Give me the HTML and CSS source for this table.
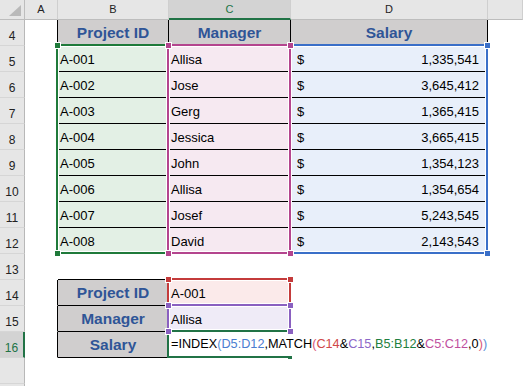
FILE: index.html
```html
<!DOCTYPE html>
<html>
<head>
<meta charset="utf-8">
<link rel="stylesheet" href="styles.css">
</head>
<body>
<div class="sheet">
  <div class="row hrow">
    <div class="cell corner"><svg width="24" height="19" viewBox="0 0 24 19"><polygon points="9,16 21,16 21,5" fill="#b9b9b9"/></svg></div>
    <div class="cell ch ca">A</div>
    <div class="cell ch cb">B</div>
    <div class="cell ch cc on">C</div>
    <div class="cell ch cd">D</div>
    <div class="cell ch ce"></div>
  </div>

  <div class="row">
    <div class="cell rh">4</div>
    <div class="cell ca bk-r"></div>
    <div class="cell cb th">Project ID</div>
    <div class="cell cc th">Manager</div>
    <div class="cell cd th">Salary</div>
    <div class="cell ce"></div>
  </div>

  <div class="row">
    <div class="cell rh">5</div>
    <div class="cell ca"></div>
    <div class="cell cb fg bk-b txt">A-001</div>
    <div class="cell cc fp bk-b txt">Allisa</div>
    <div class="cell cd fb bk-b money"><span>$</span><span>1,335,541</span></div>
    <div class="cell ce"></div>
  </div>
  <div class="row">
    <div class="cell rh">6</div>
    <div class="cell ca"></div>
    <div class="cell cb fg bk-b txt">A-002</div>
    <div class="cell cc fp bk-b txt">Jose</div>
    <div class="cell cd fb bk-b money"><span>$</span><span>3,645,412</span></div>
    <div class="cell ce"></div>
  </div>
  <div class="row">
    <div class="cell rh">7</div>
    <div class="cell ca"></div>
    <div class="cell cb fg bk-b txt">A-003</div>
    <div class="cell cc fp bk-b txt">Gerg</div>
    <div class="cell cd fb bk-b money"><span>$</span><span>1,365,415</span></div>
    <div class="cell ce"></div>
  </div>
  <div class="row">
    <div class="cell rh">8</div>
    <div class="cell ca"></div>
    <div class="cell cb fg bk-b txt">A-004</div>
    <div class="cell cc fp bk-b txt">Jessica</div>
    <div class="cell cd fb bk-b money"><span>$</span><span>3,665,415</span></div>
    <div class="cell ce"></div>
  </div>
  <div class="row">
    <div class="cell rh">9</div>
    <div class="cell ca"></div>
    <div class="cell cb fg bk-b txt">A-005</div>
    <div class="cell cc fp bk-b txt">John</div>
    <div class="cell cd fb bk-b money"><span>$</span><span>1,354,123</span></div>
    <div class="cell ce"></div>
  </div>
  <div class="row">
    <div class="cell rh">10</div>
    <div class="cell ca"></div>
    <div class="cell cb fg bk-b txt">A-006</div>
    <div class="cell cc fp bk-b txt">Allisa</div>
    <div class="cell cd fb bk-b money"><span>$</span><span>1,354,654</span></div>
    <div class="cell ce"></div>
  </div>
  <div class="row">
    <div class="cell rh">11</div>
    <div class="cell ca"></div>
    <div class="cell cb fg bk-b txt">A-007</div>
    <div class="cell cc fp bk-b txt">Josef</div>
    <div class="cell cd fb bk-b money"><span>$</span><span>5,243,545</span></div>
    <div class="cell ce"></div>
  </div>
  <div class="row">
    <div class="cell rh">12</div>
    <div class="cell ca"></div>
    <div class="cell cb fg bk-b txt">A-008</div>
    <div class="cell cc fp bk-b txt">David</div>
    <div class="cell cd fb bk-b money"><span>$</span><span>2,143,543</span></div>
    <div class="cell ce"></div>
  </div>

  <div class="row">
    <div class="cell rh">13</div>
    <div class="cell ca"></div>
    <div class="cell cb bk-b"></div>
    <div class="cell cc"></div>
    <div class="cell cd"></div>
    <div class="cell ce"></div>
  </div>
  <div class="row">
    <div class="cell rh">14</div>
    <div class="cell ca bk-r"></div>
    <div class="cell cb th">Project ID</div>
    <div class="cell cc fr txt">A-001</div>
    <div class="cell cd"></div>
    <div class="cell ce"></div>
  </div>
  <div class="row">
    <div class="cell rh">15</div>
    <div class="cell ca bk-r"></div>
    <div class="cell cb th">Manager</div>
    <div class="cell cc fv txt">Allisa</div>
    <div class="cell cd"></div>
    <div class="cell ce"></div>
  </div>
  <div class="row">
    <div class="cell rh on">16</div>
    <div class="cell ca bk-r"></div>
    <div class="cell cb th">Salary</div>
    <div class="cell cc fx">=INDEX<span class="k-b2">(</span><span class="k-b">D5:D12</span>,MATCH<span class="k-r2">(</span><span class="k-r">C14</span>&amp;<span class="k-v">C15</span>,<span class="k-g">B5:B12</span>&amp;<span class="k-p">C5:C12</span>,0<span class="k-r2">)</span><span class="k-b2">)</span></div>
    <div class="cell cd"></div>
    <div class="cell ce"></div>
  </div>
  <div class="row">
    <div class="cell rh"></div>
    <div class="cell ca"></div>
    <div class="cell cb"></div>
    <div class="cell cc"></div>
    <div class="cell cd"></div>
    <div class="cell ce"></div>
  </div>
  <div class="row">
    <div class="cell rh"></div>
    <div class="cell ca"></div>
    <div class="cell cb"></div>
    <div class="cell cc"></div>
    <div class="cell cd"></div>
    <div class="cell ce"></div>
  </div>

  <div class="rng r-blue"><i class="h tl"></i><i class="h tr"></i><i class="h bl"></i><i class="h br"></i></div>
  <div class="rng r-green"><i class="h tl"></i><i class="h tr"></i><i class="h bl"></i><i class="h br"></i></div>
  <div class="rng r-pink"><i class="h tl"></i><i class="h tr"></i><i class="h bl"></i><i class="h br"></i></div>
  <div class="rng r-red"><i class="h tl"></i><i class="h tr"></i><i class="h bl"></i><i class="h br"></i></div>
  <div class="rng r-purple"><i class="h tl"></i><i class="h tr"></i><i class="h bl"></i><i class="h br"></i></div>
  <div class="act"><i class="fh"></i></div>
</div>
</body>
</html>
```

FILE: styles.css
```css
html, body {
  margin: 0;
  padding: 0;
  background: #fff;
}
body {
  font-family: "Liberation Sans", Arial, sans-serif;
}
.sheet {
  position: relative;
  width: 523px;
  height: 386px;
  overflow: hidden;
}
.row {
  display: flex;
  height: 26px;
}
.hrow {
  height: 20px;
}
.cell {
  box-sizing: border-box;
  height: 100%;
  flex: none;
  border-right: 1px solid transparent;
  border-bottom: 1px solid transparent;
  font-size: 13px;
  color: #000;
  white-space: nowrap;
}
.ca { width: 33px; }
.cb { width: 111px; }
.cc { width: 122px; }
.cd { width: 197px; }
.ce { flex: 1 1 auto; }

.corner {
  width: 25px;
  background: #e6e6e6;
  border-right-color: #bdbdbd;
  border-bottom-color: #bdbdbd;
}
.corner svg { display: block; }

.ch {
  background: #e6e6e6;
  border-right-color: #cfcfcf;
  border-bottom-color: #bdbdbd;
  text-align: center;
  font-size: 11px;
  line-height: 19px;
  color: #222;
}
.ch.on {
  background: #d3d3d3;
  color: #217346;
  border-bottom: 2px solid #217346;
  line-height: 18px;
}
.rh {
  width: 25px;
  background: #e6e6e6;
  border-right-color: #b8b8b8;
  border-bottom-color: #d6d6d6;
  text-align: center;
  font-size: 12px;
  color: #222;
  padding-top: 8px;
  line-height: 17px;
}
.rh.on {
  background: #d3d3d3;
  color: #217346;
  border-right: 2px solid #217346;
}

.bk-r { border-right-color: #000; }
.bk-b { border-bottom-color: #000; }

.th {
  background: #d0cece;
  border-right-color: #000;
  border-bottom-color: #000;
  color: #2f5597;
  font-weight: bold;
  font-size: 15.5px;
  text-align: center;
  line-height: 25px;
}
.txt {
  padding: 3px 0 0 2px;
  line-height: 22px;
}
.money {
  display: flex;
  justify-content: space-between;
  padding: 3px 8px 0 6px;
  line-height: 22px;
}
.fx {
  padding: 1px 0 0 2px;
  font-size: 12.7px;
  line-height: 22px;
  overflow: visible;
}
.fg { background: #e3f0e5; }
.fp { background: #f6e9f1; }
.fb { background: #e8effa; }
.fr { background: #fbeaea; }
.fv { background: #efebf7; }

.k-b { color: #4a7dd0; }
.k-b2 { color: #5b8fd6; }
.k-r { color: #d04848; }
.k-r2 { color: #d9587a; }
.k-v { color: #8c68c8; }
.k-g { color: #1f8040; }
.k-p { color: #bf4f9e; }

.rng {
  position: absolute;
  box-sizing: border-box;
  border: 2px solid currentColor;
  box-shadow: inset 0 0 0 1px #fff;
}
.h {
  position: absolute;
  width: 5px;
  height: 5px;
  background: currentColor;
  box-shadow: 0 0 0 1px #fff;
  z-index: 2;
}
.tl { left: -3px; top: -3px; }
.tr { right: -4px; top: -3px; }
.bl { left: -3px; bottom: -4px; }
.br { right: -4px; bottom: -4px; }

.r-blue { left: 289px; top: 44px; width: 199px; height: 210px; color: #3a6fc8; }
.r-green { left: 56px; top: 44px; width: 113px; height: 210px; color: #1f7a3a; }
.r-pink { left: 167px; top: 44px; width: 124px; height: 210px; color: #b4458e; }
.r-red { left: 167px; top: 278px; width: 124px; height: 28px; color: #c43b3b; }
.r-purple { left: 167px; top: 304px; width: 124px; height: 28px; color: #8a60c0; }

.act {
  position: absolute;
  box-sizing: border-box;
  left: 167px;
  top: 330px;
  width: 125px;
  height: 28px;
  border: 2px solid #217346;
  border-right: none;
}
.fh {
  position: absolute;
  right: 0;
  bottom: -3px;
  width: 4px;
  height: 3px;
  background: #217346;
}
```
